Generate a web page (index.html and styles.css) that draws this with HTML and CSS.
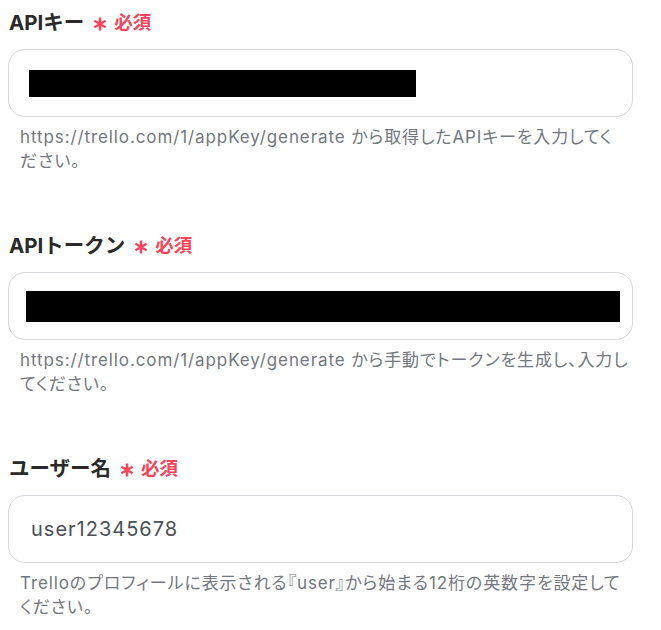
FILE: index.html
```html
<!DOCTYPE html>
<html lang="ja">
<head>
<meta charset="utf-8">
<link rel="stylesheet" href="styles.css">
</head>
<body>
<div class="form">
  <div class="field">
    <div class="label"><span class="name">APIキー</span><span class="req"><svg class="ast" viewBox="0 0 14 14" width="14" height="14"><path d="M7 0.5v13M1.4 3.75l11.2 6.5M1.4 10.25l11.2-6.5"/></svg>必須</span></div>
    <div class="input"><div class="mask mask-a"></div></div>
    <p class="help">https://trello.com/1/appKey/generate から取得したAPIキーを入力してください。</p>
  </div>
  <div class="field">
    <div class="label"><span class="name">APIトークン</span><span class="req"><svg class="ast" viewBox="0 0 14 14" width="14" height="14"><path d="M7 0.5v13M1.4 3.75l11.2 6.5M1.4 10.25l11.2-6.5"/></svg>必須</span></div>
    <div class="input input-b"><div class="mask mask-b"></div></div>
    <p class="help">https://trello.com/1/appKey/generate から手動でトークンを生成し、入力してください。</p>
  </div>
  <div class="field">
    <div class="label"><span class="name">ユーザー名</span><span class="req"><svg class="ast" viewBox="0 0 14 14" width="14" height="14"><path d="M7 0.5v13M1.4 3.75l11.2 6.5M1.4 10.25l11.2-6.5"/></svg>必須</span></div>
    <div class="input input-text">user12345678</div>
    <p class="help">Trelloのプロフィールに表示される『user』から始まる12桁の英数字を設定してください。</p>
  </div>
</div>
</body>
</html>
```

FILE: styles.css
```css
* { box-sizing: border-box; }
html, body { margin: 0; padding: 0; background: #fff; }
body {
  font-family: Inter, "Noto Sans CJK JP", sans-serif;
  width: 661px;
}
.form {
  padding: 7px 24px 0 8px;
  display: flex;
  flex-direction: column;
  gap: 57px;
}
.field { display: flex; flex-direction: column; }
.label {
  display: flex;
  align-items: center;
  height: 28px;
  padding-left: 1px;
  gap: 9px;
}
.name {
  font-size: 20.5px;
  font-weight: 700;
  color: #2a2a2a;
}
.req {
  display: flex;
  align-items: center;
  color: #f5455c;
  font-size: 18.5px;
  font-weight: 700;
}
.ast {
  fill: none;
  stroke: #f5455c;
  stroke-width: 2.5;
  margin-right: 7px;
  position: relative;
  top: 3px;
}
.input {
  margin-top: 14px;
  height: 68px;
  width: 625px;
  border: 1px solid #d4d7de;
  border-radius: 17px;
  display: flex;
  align-items: center;
  padding-left: 20px;
}
.mask { background: #000; }
.mask-a { width: 387px; height: 27px; }
.input-b { padding-left: 17px; }
.mask-b { width: 594px; height: 31px; }
.input-text {
  padding-left: 22px;
  font-size: 20px;
  letter-spacing: 1px;
  color: #4a4f57;
}
.help {
  margin: 8px 0 0;
  padding: 0 8px 0 12px;
  font-size: 17px;
  letter-spacing: 0.9px;
  line-height: 24px;
  color: #737780;
  font-feature-settings: "palt";
}
```
